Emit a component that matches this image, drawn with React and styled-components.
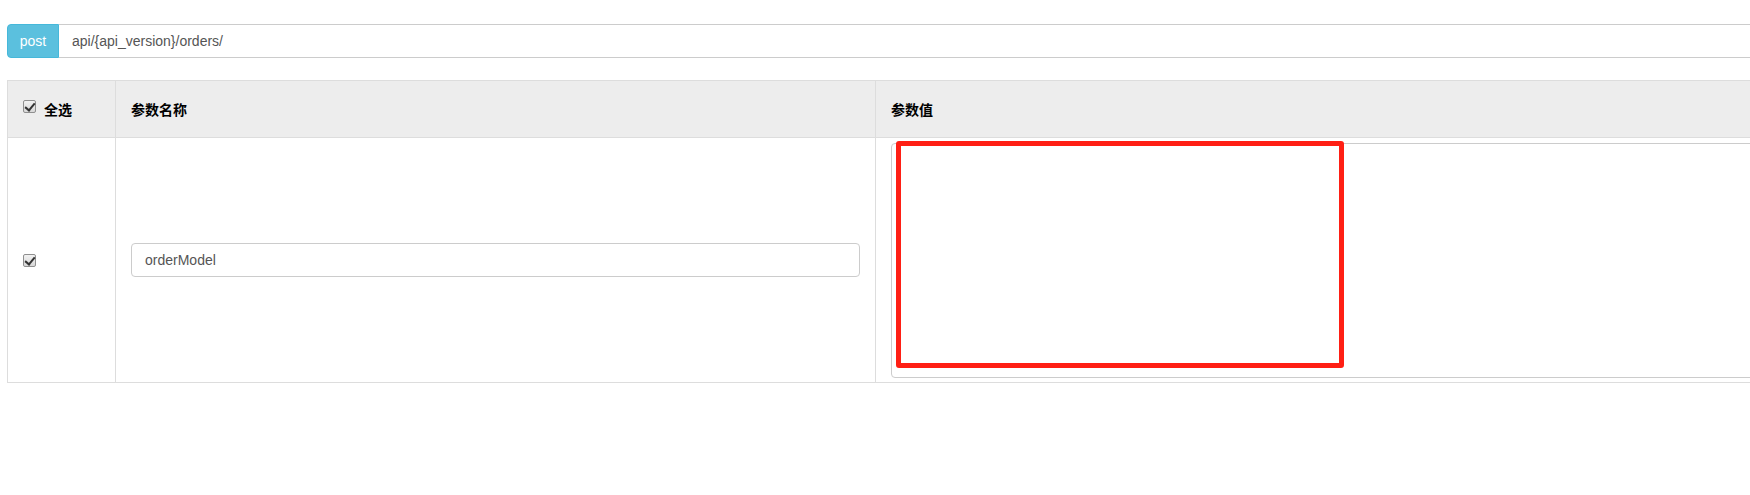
import React from "react";
import styled, { createGlobalStyle } from "styled-components";

const Global = createGlobalStyle`
  html, body { margin: 0; padding: 0; background: #fff; overflow: hidden; }
  body { font-family: "Liberation Sans", Arial, "Noto Sans CJK SC", sans-serif; font-size: 14px; color: #333; }
  * { box-sizing: border-box; }
`;

const Page = styled.div`
  width: 2000px;
  padding: 24px 0 0 7px;
`;

const UrlGroup = styled.div`
  display: flex;
  height: 34px;
`;

const MethodTag = styled.span`
  display: flex;
  align-items: center;
  width: 52px;
  justify-content: center;
  background: #5bc0de;
  border: 1px solid #46b8da;
  border-radius: 4px 0 0 4px;
  color: #fff;
  font-size: 14px;
`;

const UrlInput = styled.div`
  flex: 1;
  display: flex;
  align-items: center;
  padding: 0 13px;
  border: 1px solid #ccc;
  border-left: none;
  color: #555;
  font-size: 14px;
`;

const Grid = styled.div`
  margin-top: 22px;
  display: grid;
  grid-template-columns: 108px 760px 1fr;
  border-top: 1px solid #ddd;
  border-left: 1px solid #ddd;
`;

const Cell = styled.div`
  position: relative;
  display: flex;
  align-items: ${(p) => (p.$top ? "flex-start" : "center")};
  padding: ${(p) => (p.$top ? "5px 0 0 15px" : "0 15px")};
  height: ${(p) => (p.$head ? "57px" : "245px")};
  background: ${(p) => (p.$head ? "#ededed" : "#fff")};
  border-right: 1px solid #ddd;
  border-bottom: 1px solid #ddd;
  gap: 8px;
`;

const HeadText = styled.span`
  font-weight: bold;
  font-size: 14px;
  color: #000;
`;

const Check = styled.span`
  position: relative;
  display: inline-block;
  width: 13px;
  height: 13px;
  margin-top: ${(p) => (p.$raise ? "-6px" : "0")};
  border: 1px solid #8f8f8f;
  border-radius: 2px;
  background: linear-gradient(#f2f2f2, #d8d8d8);
  &::after {
    content: "";
    position: absolute;
    left: 3px;
    top: 0px;
    width: 4px;
    height: 8px;
    border-right: 2px solid #333;
    border-bottom: 2px solid #333;
    transform: rotate(40deg);
  }
`;

const TextInput = styled.div`
  flex: 1;
  height: 34px;
  display: flex;
  align-items: center;
  padding: 0 13px;
  border: 1px solid #ccc;
  border-radius: 4px;
  color: #555;
  font-size: 14px;
`;

const TextArea = styled.div`
  width: 100%;
  height: 235px;
  border: 1px solid #ccc;
  border-radius: 4px;
  background: #fff;
`;

const Highlight = styled.div`
  position: absolute;
  left: 20px;
  top: 3px;
  width: 448px;
  height: 227px;
  border: 5px solid #ff1f14;
  border-radius: 3px;
`;

export default function App() {
  return (
    <>
      <Global />
      <Page>
        <UrlGroup>
          <MethodTag>post</MethodTag>
          <UrlInput>api/&#123;api_version&#125;/orders/</UrlInput>
        </UrlGroup>
        <Grid>
          <Cell $head>
            <Check $raise />
            <HeadText>全选</HeadText>
          </Cell>
          <Cell $head>
            <HeadText>参数名称</HeadText>
          </Cell>
          <Cell $head>
            <HeadText>参数值</HeadText>
          </Cell>
          <Cell>
            <Check />
          </Cell>
          <Cell>
            <TextInput>orderModel</TextInput>
          </Cell>
          <Cell $top>
            <TextArea />
            <Highlight />
          </Cell>
        </Grid>
      </Page>
    </>
  );
}
